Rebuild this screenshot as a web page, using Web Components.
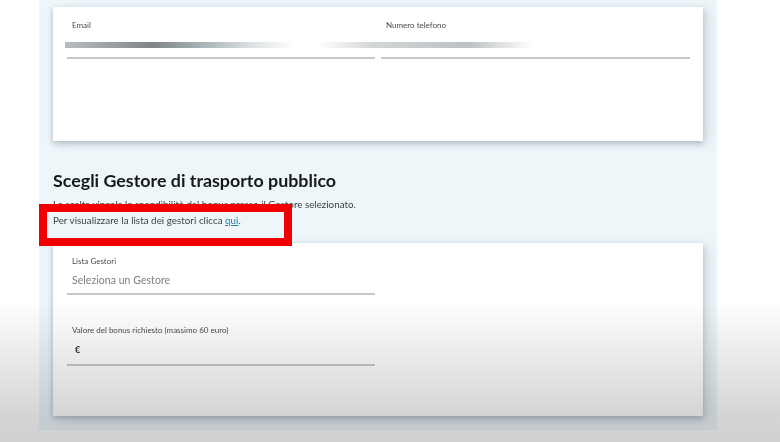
<!DOCTYPE html>
<html lang="it">
<head>
<meta charset="utf-8">
<title>Scegli Gestore</title>
<style>
  html, body { margin: 0; height: 442px; overflow: hidden; background: #fff; }
  body { font-family: Lato, "Open Sans", sans-serif; color: #1c2024; }
</style>
</head>
<body>
<bonus-page>
  <form-card style="--card-height: 134px; --card-pad: 12px" columns="2">
    <form-field label="Email" smear="1"></form-field>
    <form-field label="Numero telefono" smear="2"></form-field>
  </form-card>

  <section-intro title="Scegli Gestore di trasporto pubblico">
    <span slot="cut">La scelta vincola la spendibilità del bonus presso il Gestore selezionato.</span>
    Per visualizzare la lista dei gestori clicca <a href="#">qui</a>.
  </section-intro>

  <form-card style="--card-height: 173px; --card-pad: 12px" columns="1">
    <form-field label="Lista Gestori" value="Seleziona un Gestore" kind="placeholder"></form-field>
    <form-field label="Valore del bonus richiesto (massimo 60 euro)" value="€" kind="euro"></form-field>
  </form-card>
</bonus-page>

<script>
class BonusPage extends HTMLElement {
  constructor() {
    super();
    this.attachShadow({ mode: 'open' });
  }

  connectedCallback() {
    this.shadowRoot.innerHTML = `
      <style>
        :host {
          display: block;
          position: relative;
          width: 780px;
          height: 442px;
          overflow: hidden;
        }

        .panel {
          margin: 0 63px 0 39px;
          height: 430px;
          box-sizing: border-box;
          padding: 7px 14px 0;
          background: #eef6fa;
        }

        .fade {
          position: absolute;
          left: 0;
          right: 0;
          top: 300px;
          bottom: 0;
          background: linear-gradient(to bottom, rgba(0,0,0,0) 0%, rgba(0,0,0,.165) 80%, rgba(0,0,0,.185) 100%);
          pointer-events: none;
        }

        .mark {
          position: absolute;
          left: 39px;
          top: 204px;
          width: 253px;
          height: 42px;
          box-sizing: border-box;
          border: 8px solid #f00000;
          pointer-events: none;
        }
      </style>
      <div class="panel"><slot></slot></div>
      <div class="fade"></div>
      <div class="mark"></div>
    `;
  }
}

class FormCard extends HTMLElement {
  constructor() {
    super();
    this.attachShadow({ mode: 'open' });
  }

  connectedCallback() {
    const cols = this.getAttribute('columns') === '2' ? '308px 1fr' : '308px';
    this.shadowRoot.innerHTML = `
      <style>
        :host {
          display: block;
          height: var(--card-height);
          box-sizing: border-box;
          padding: var(--card-pad) 13px 0 14px;
          background: #fff;
          box-shadow: 0 3px 6px rgba(90,110,120,.3), 7px 2px 10px rgba(120,140,150,.16), -2px 1px 4px rgba(120,140,150,.12);
        }

        .grid {
          display: grid;
          grid-template-columns: ${cols};
          column-gap: 6px;
          row-gap: 29px;
        }
      </style>
      <div class="grid"><slot></slot></div>
    `;
  }
}

class FormField extends HTMLElement {
  constructor() {
    super();
    this.attachShadow({ mode: 'open' });
  }

  connectedCallback() {
    const label = this.getAttribute('label');
    const value = this.getAttribute('value') || '';
    const kind = this.getAttribute('kind') || '';
    const smear = this.getAttribute('smear');
    this.shadowRoot.innerHTML = `
      <style>
        :host {
          display: block;
          position: relative;
        }

        label {
          display: block;
          height: 12px;
          padding-left: 5px;
          font-size: 8px;
          line-height: 12px;
          color: #444b50;
          filter: blur(.45px);
        }

        .value {
          height: 26px;
          padding-left: 5px;
          font-size: 10.5px;
          line-height: 26px;
          color: #7b8084;
          letter-spacing: .05px;
          filter: blur(.4px);
        }

        .value.euro {
          height: 28px;
          line-height: 28px;
          padding-left: 8px;
          color: #30363a;
          font-weight: 700;
          font-size: 9px;
        }

        .line {
          height: 2px;
          background: #c6cacb;
        }

        .smear {
          position: absolute;
          top: 23px;
          height: 6px;
          filter: blur(.4px);
        }

        .smear.s1 {
          left: -2px;
          width: 230px;
          background: linear-gradient(to right, #b9bdbf 0%, #7f8587 38%, #a9b4b8 60%, rgba(200,207,210,.6) 82%, rgba(255,255,255,0) 100%);
        }

        .smear.s2 {
          left: -63px;
          width: 215px;
          background: linear-gradient(to right, rgba(255,255,255,0) 0%, #d4d7d8 25%, #bdc1c3 70%, rgba(255,255,255,0) 100%);
        }
      </style>
      <label>${label}</label>
      <div class="value ${kind}">${value}</div>
      <div class="line"></div>
      ${smear ? `<div class="smear s${smear}"></div>` : ''}
    `;
  }
}

class SectionIntro extends HTMLElement {
  constructor() {
    super();
    this.attachShadow({ mode: 'open' });
  }

  connectedCallback() {
    this.shadowRoot.innerHTML = `
      <style>
        :host {
          display: block;
          height: 102px;
          box-sizing: border-box;
          padding-top: 28px;
        }

        h2 {
          margin: 0;
          font-size: 17.85px;
          line-height: 22px;
          font-weight: 700;
          color: #15191c;
          filter: blur(.35px);
        }

        p {
          margin: 0;
          font-size: 9.8px;
          line-height: 15px;
          color: #3c4347;
          filter: blur(.35px);
        }

        .cut {
          margin-top: 6px;
          margin-bottom: 1px;
          display: block;
        }

        .cut + p {
          letter-spacing: .03px;
        }

        ::slotted(a) {
          color: #1b7fa6;
        }
      </style>
      <h2>${this.getAttribute('title')}</h2>
      <p class="cut"><slot name="cut"></slot></p>
      <p><slot></slot></p>
    `;
  }
}

customElements.define('bonus-page', BonusPage);
customElements.define('form-card', FormCard);
customElements.define('form-field', FormField);
customElements.define('section-intro', SectionIntro);
</script>
</body>
</html>
